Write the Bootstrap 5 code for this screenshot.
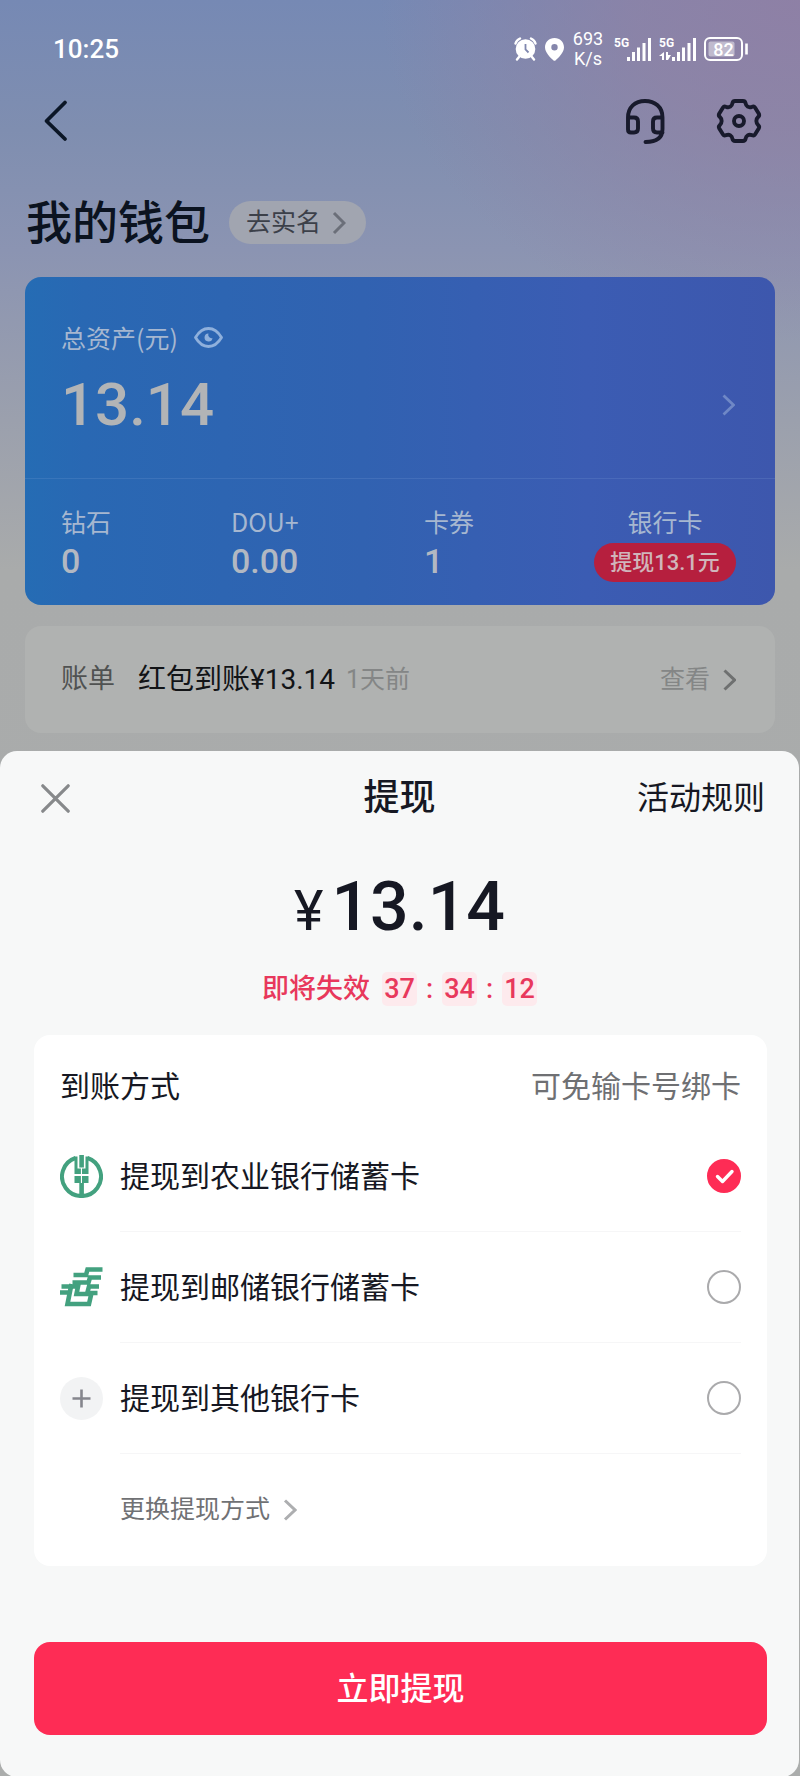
<!DOCTYPE html>
<html lang="zh-CN">
<head>
<meta charset="utf-8">
<meta name="viewport" content="width=device-width, initial-scale=1">
<title>我的钱包 - 提现</title>
<link href="https://cdn.jsdelivr.net/npm/bootstrap@5.3.0/dist/css/bootstrap.min.css" rel="stylesheet">
<style>
  body {
    font-family: Roboto, "Noto Sans CJK SC", sans-serif;
    color: #161823;
    background: #abadac;
  }
  button, input { font-family: inherit; }
  a { color: inherit; text-decoration: none; }
  svg { display: block; flex: none; }

  .wallet-page {
    min-height: 100vh;
    background:
      radial-gradient(ellipse 420px 340px at 100% 0, rgba(148,126,162,.8) 0, rgba(148,128,162,.65) 40%, rgba(148,130,162,0) 100%),
      linear-gradient(180deg, #7689b4 0, #7f8eb0 130px, #8b94b2 250px, #9ba0ad 420px, #a9abab 570px, #abadac 100%);
  }

  /* status bar */
  .status-bar { height: 50px; margin-top: 24px; padding: 0 52px 0 53px; color: #fff; }
  .clock { font-size: 26px; font-weight: 500; line-height: 32px; }
  .net-speed { width: 32px; margin: 0 10px 0 8px; font-size: 18px; line-height: 20px; text-align: center; }

  /* page header */
  .top-nav { height: 94px; padding: 0 38px 0 40px; }
  .icon-btn { border: 0; padding: 0; background: none; color: inherit; }
  .page-title { height: 109px; padding-left: 26px; gap: 19px; }
  .page-title h1 { font-size: 46px; font-weight: 500; line-height: 60px; color: #0b1320; }
  .verify-pill { height: 43px; padding: 0 20px 0 17px; gap: 11px; border-radius: 22px; background: #a1a5b0; color: #3c4049; font-size: 25px; line-height: 36px; }

  /* asset card */
  .asset-card { margin: 0 25px; border-radius: 16px; color: #b3b8c2; background: linear-gradient(90deg, #256cb4 0, #2968b3 8%, #3162b1 45%, #3b5cb3 75%, #3d57ad 100%); }
  .asset-total { padding: 42px 40px 38px 36px; border-bottom: 1px solid rgba(140,170,220,.18); }
  .asset-label { font-family: "Noto Sans CJK SC", sans-serif; font-size: 25px; line-height: 36px; color: #a6b7d0; }
  .asset-amount { margin-top: 15px; font-size: 60px; font-weight: 500; line-height: 70px; color: #b2b4b6; }
  .asset-grid { display: grid; grid-template-columns: 170fr 193fr 170fr 142fr; padding: 24px 39px 23px 36px; }
  .asset-value { margin-top: 2px; font-size: 34px; font-weight: 500; line-height: 40px; color: #b2b8c2; }
  .cash-badge { height: 39px; border-radius: 20px; background: #b61f3e; color: #d0b5bb; font-size: 22px; font-weight: 500; line-height: 39px; }

  /* bill row */
  .bill-card { margin: 21px 25px 18px; height: 107px; padding: 0 39px 0 36px; border-radius: 16px; background: #b0b2b1; font-size: 28px; color: #121417; }
  .bill-name { font-size: 27px; color: #505252; margin-right: 23px; }
  .bill-time, .bill-more { font-size: 25px; color: #848686; }
  .bill-time { margin-left: 11px; }
  .bill-more { gap: 13px; }

  /* withdraw sheet */
  .sheet { margin-right: 1px; padding-bottom: 42px; border-radius: 17px; background: #f7f8f8; }
  .sheet-head { display: grid; grid-template-columns: 1fr auto 1fr; align-items: center; height: 94px; padding: 0 34px; }
  .sheet-head h2 { font-size: 36px; font-weight: 500; line-height: 46px; }
  .sheet-head a { font-size: 32px; line-height: 40px; }
  .close-btn { padding-left: 7px; text-align: left; }
  .sheet-amount { margin-top: 22px; height: 80px; line-height: 80px; gap: 8px; font-weight: 500; font-size: 68px; }
  .sheet-amount .yuan { font-size: 56px; font-weight: 400; }
  .countdown { margin-top: 25px; height: 34px; color: #e8385c; font-size: 27px; font-weight: 500; line-height: 34px; }
  .time-box { width: 35px; border-radius: 5px; background: #fdeaed; text-align: center; }
  .time-sep { width: 25px; text-align: center; }

  .method-card { margin: 29px 32px 0 34px; padding: 17px 26px 0; border-radius: 16px; background: #fff; font-size: 30px; }
  .method-head { height: 69px; }
  .method-hint { color: #6f7073; }
  .method-row { height: 111px; gap: 17px; cursor: pointer; }
  .method-body { height: 111px; border-bottom: 1px solid #f6f6f7; }
  .method-row .form-check-input { width: 34px; height: 34px; margin: 0; border: 2px solid #aaaaac; background-color: #fff; box-shadow: none; }
  .method-row .form-check-input:checked { border-color: #fe2c55; background-color: #fe2c55;
    background-image: url("data:image/svg+xml,%3csvg xmlns='http://www.w3.org/2000/svg' viewBox='0 0 30 30'%3e%3cpath fill='none' stroke='%23fff' stroke-width='3.4' stroke-linecap='round' stroke-linejoin='round' d='M8.5 15.5l5 5 9.500-10'/%3e%3c/svg%3e"); }
  .method-switch { height: 112px; padding-left: 60px; gap: 13px; font-size: 25px; color: #707174; }
  .submit-btn { height: 93px; margin: 76px 32px 0 34px; border: 0; border-radius: 16px; background: #fe2c55; color: #fff; font-size: 32px; font-weight: 500; }
</style>
</head>
<body>
<div class="wallet-page overflow-hidden">

  <div class="status-bar d-flex align-items-center justify-content-between">
    <div class="clock">10:25</div>
    <div class="d-flex align-items-center">
      <svg width="23" height="24" viewBox="0 0 23 24"><g fill="none" stroke="#fff" stroke-width="2.400" stroke-linecap="round"><path d="M1.500 6.500A8 8 0 0 1 6 1.500M21.500 6.500A8 8 0 0 0 17 1.500M5 20l-2 2.500M18 20l2 2.500"/></g><circle cx="11.500" cy="12" r="9.800" fill="#fff"/><path d="M11.500 7v5.500l3 3" fill="none" stroke="#7f87ae" stroke-width="1.800"/></svg>
      <svg class="ms-2" width="19" height="23" viewBox="0 0 19 23"><path fill="#fff" fill-rule="evenodd" d="M9.500 0C4 0 0 4.200 0 9.300c0 5.200 5 10 8.300 13 .7.700 1.700.700 2.400 0C14 19.300 19 14.500 19 9.300 19 4.200 15 0 9.500 0zm0 6a3.200 3.200 0 1 1 0 6.400 3.200 3.200 0 0 1 0-6.400z"/></svg>
      <div class="net-speed">693<br>K/s</div>
      <svg class="me-2" width="37" height="24" viewBox="0 0 37 24" fill="#fff"><text x="0" y="10" font-size="12" font-weight="700">5G</text><path d="M13 20h3v4h-3zM18 15h3v9h-3zM23 10.500h3V24h-3zM28.500 6h3v18h-3zM34 1h3v23h-3z"/></svg>
      <svg class="me-2" width="37" height="24" viewBox="0 0 37 24" fill="#fff"><text x="0" y="10" font-size="12" font-weight="700">5G</text><path d="M13 20h3v4h-3zM18 15h3v9h-3zM23 10.500h3V24h-3zM28.500 6h3v18h-3zM34 1h3v23h-3zM5 15v8H3v-4H0zM7 15h2v3h3l-3 5H7z"/></svg>
      <svg width="44" height="24" viewBox="0 0 44 24"><rect x="1" y="1" width="37" height="22" rx="5" fill="none" stroke="#fff" stroke-width="2"/><rect x="4.500" y="4.500" width="26" height="15" rx="2" fill="#fff" opacity=".45"/><path d="M42.500 6.500v11" stroke="#fff" stroke-width="2.600"/><text x="19.500" y="18.500" font-size="18" font-weight="500" fill="#fff" text-anchor="middle">82</text></svg>
    </div>
  </div>

  <nav class="top-nav d-flex align-items-center justify-content-between">
    <button type="button" class="icon-btn" aria-label="返回">
      <svg width="32" height="44" viewBox="0 0 32 44"><path d="M25 3.500L6.500 22 25 40" fill="none" stroke="#0b1626" stroke-width="3.800" stroke-linecap="round" stroke-linejoin="round"/></svg>
    </button>
    <div class="d-flex align-items-center">
      <button type="button" class="icon-btn me-5" aria-label="客服">
        <svg width="46" height="46" viewBox="0 0 46 46" fill="none" stroke="#181a2c" stroke-width="3.900" stroke-linecap="round" stroke-linejoin="round"><path d="M6 19.500C6 9 13 3 23 3s17.500 6 17.500 16.500V31c0 8.500-5 13-17 13M6 19.500V31.500q0 3 3 3h3q4 0 4-4v-7q0-4-4-4zM40.500 19.500H35q-4 0-4 4v7q0 4 4 4h5.500"/></svg>
      </button>
      <button type="button" class="icon-btn" aria-label="设置">
        <svg width="46" height="46" viewBox="0 0 46 46" fill="none" stroke="#181a2c" stroke-width="3.900" stroke-linejoin="round"><circle cx="23" cy="23" r="5"/><path d="M19 3h8q2 0 2.500 2c.6 3.500 3 5 6.500 3.800q2-.8 3 .7l3.700 6q1.100 2-.4 3.300c-2.600 2.400-2.600 6 0 8.400q1.500 1.300.4 3.300l-3.700 6q-1 1.500-3 .7c-3.500-1.200-5.900.3-6.500 3.800Q29 43 27 43h-8q-2 0-2.500-2c-.6-3.500-3-5-6.500-3.800q-2 .8-3-.7l-3.700-6q-1.100-2 .4-3.300c2.600-2.400 2.600-6 0-8.400q-1.500-1.300-.4-3.300l3.700-6q1-1.500 3-.7c3.500 1.200 5.900-.3 6.500-3.800Q17 3 19 3z"/></svg>
      </button>
    </div>
  </nav>

  <div class="page-title d-flex align-items-center">
    <h1 class="m-0">我的钱包</h1>
    <a href="#" class="verify-pill d-flex align-items-center">去实名
      <svg width="14" height="24" viewBox="0 0 14 24"><path d="M2 2l10 10L2 22" fill="none" stroke="#6b6f79" stroke-width="3"/></svg>
    </a>
  </div>

  <section class="asset-card">
    <div class="asset-total">
      <div class="asset-label d-flex align-items-center">总资产(元)
        <button type="button" class="icon-btn ms-3" aria-label="隐藏金额">
          <svg width="29" height="21" viewBox="0 0 29 21"><path d="M1.500 10.500C5 4.500 9.500 1.500 14.500 1.500s9.500 3 13 9c-3.500 6-8 9-13 9s-9.500-3-13-9z" fill="none" stroke="#8fb0dc" stroke-width="2.800" stroke-linejoin="round"/><path d="M14.500 6.500a4 4 0 1 0 4 4.500 3.300 3.300 0 0 1-4-4.500z" fill="#8fb0dc"/></svg>
        </button>
      </div>
      <div class="d-flex align-items-end justify-content-between">
        <div class="asset-amount">13.14</div>
        <a href="#" aria-label="资产详情" class="pb-4"><svg width="13" height="22" viewBox="0 0 13 22"><path d="M1.500 1.500l10 9.500-10 9.500" fill="none" stroke="#6f88c6" stroke-width="2.800"/></svg></a>
      </div>
    </div>
    <div class="asset-grid">
      <div><div class="asset-label">钻石</div><div class="asset-value">0</div></div>
      <div><div class="asset-label">DOU+</div><div class="asset-value">0.00</div></div>
      <div><div class="asset-label">卡券</div><div class="asset-value">1</div></div>
      <div class="text-center"><div class="asset-label">银行卡</div><div class="cash-badge mt-1">提现13.1元</div></div>
    </div>
  </section>

  <section class="bill-card d-flex align-items-center">
    <span class="bill-name">账单</span>
    <span>红包到账¥13.14</span>
    <span class="bill-time">1天前</span>
    <a href="#" class="bill-more d-flex align-items-center ms-auto">查看
      <svg width="13" height="22" viewBox="0 0 13 22"><path d="M1.500 1.500l10 9.500-10 9.500" fill="none" stroke="#6e7070" stroke-width="3"/></svg>
    </a>
  </section>

  <form class="sheet" onsubmit="return false">
    <header class="sheet-head">
      <button type="button" class="icon-btn close-btn" aria-label="关闭">
        <svg width="29" height="29" viewBox="0 0 29 29"><path d="M1.800 1.800l25.400 25.400M27.200 1.800L1.800 27.200" stroke="#87898b" stroke-width="3.200" stroke-linecap="round"/></svg>
      </button>
      <h2 class="m-0">提现</h2>
      <a href="#" class="text-end">活动规则</a>
    </header>

    <div class="sheet-amount d-flex justify-content-center align-items-baseline">
      <span class="yuan">¥</span><span>13.14</span>
    </div>

    <div class="countdown d-flex justify-content-center">
      <span class="me-2 pe-1">即将失效</span>
      <span class="time-box">37</span><span class="time-sep">:</span>
      <span class="time-box">34</span><span class="time-sep">:</span>
      <span class="time-box">12</span>
    </div>

    <section class="method-card">
      <div class="method-head d-flex align-items-center justify-content-between">
        <span>到账方式</span><span class="method-hint">可免输卡号绑卡</span>
      </div>

      <label class="method-row d-flex align-items-center" for="abc">
        <svg width="43" height="43" viewBox="0 0 43 43"><g fill="none" stroke="#43a17f" stroke-width="4"><path d="M15.500 3A19.500 19.500 0 1 0 27.500 3"/></g><g fill="#43a17f"><path d="M19.300 0h4.600v12.500h-4.600zM14.500 1.500h3v12h3.400V19H14.500zM28.500 1.500h-3v12H22V19h6.500zM14.500 21h6.400v7h-6.400zM22 21h6.500v7H22zM19.300 28h4.600v12h-4.600z"/></g></svg>
        <span class="method-body d-flex flex-fill align-items-center justify-content-between">提现到农业银行储蓄卡
          <input class="form-check-input" type="radio" name="bank" id="abc" checked></span>
      </label>

      <label class="method-row d-flex align-items-center" for="psbc">
        <svg width="43" height="43" viewBox="0 0 43 43"><g fill="none" stroke="#43a17f" stroke-width="4.600"><path d="M42.500 3.500H27.500L26 9H13.500M41 11.500H30L28.500 16.500H12.500M39 20.500H29L27 28H16.500L18 20.500H1.500M37.500 27H31.500L29 38H7.500L11.500 18M0 26.500H11"/></g></svg>
        <span class="method-body d-flex flex-fill align-items-center justify-content-between">提现到邮储银行储蓄卡
          <input class="form-check-input" type="radio" name="bank" id="psbc"></span>
      </label>

      <label class="method-row d-flex align-items-center" for="other">
        <svg width="43" height="43" viewBox="0 0 43 43"><circle cx="21.500" cy="21.500" r="21.500" fill="#f2f3f4"/><path d="M12.500 21.500h18M21.500 12.500v18" stroke="#85868d" stroke-width="2.600"/></svg>
        <span class="method-body d-flex flex-fill align-items-center justify-content-between">提现到其他银行卡
          <input class="form-check-input" type="radio" name="bank" id="other"></span>
      </label>

      <a href="#" class="method-switch d-flex align-items-center">更换提现方式
        <svg width="14" height="22" viewBox="0 0 14 22"><path d="M2 1.500L12 11 2 20.500" fill="none" stroke="#adaeb0" stroke-width="3"/></svg>
      </a>
    </section>

    <div class="d-flex"><button type="submit" class="submit-btn flex-fill">立即提现</button></div>
  </form>
</div>
<script src="https://cdn.jsdelivr.net/npm/bootstrap@5.3.0/dist/js/bootstrap.bundle.min.js"></script>
</body>
</html>
